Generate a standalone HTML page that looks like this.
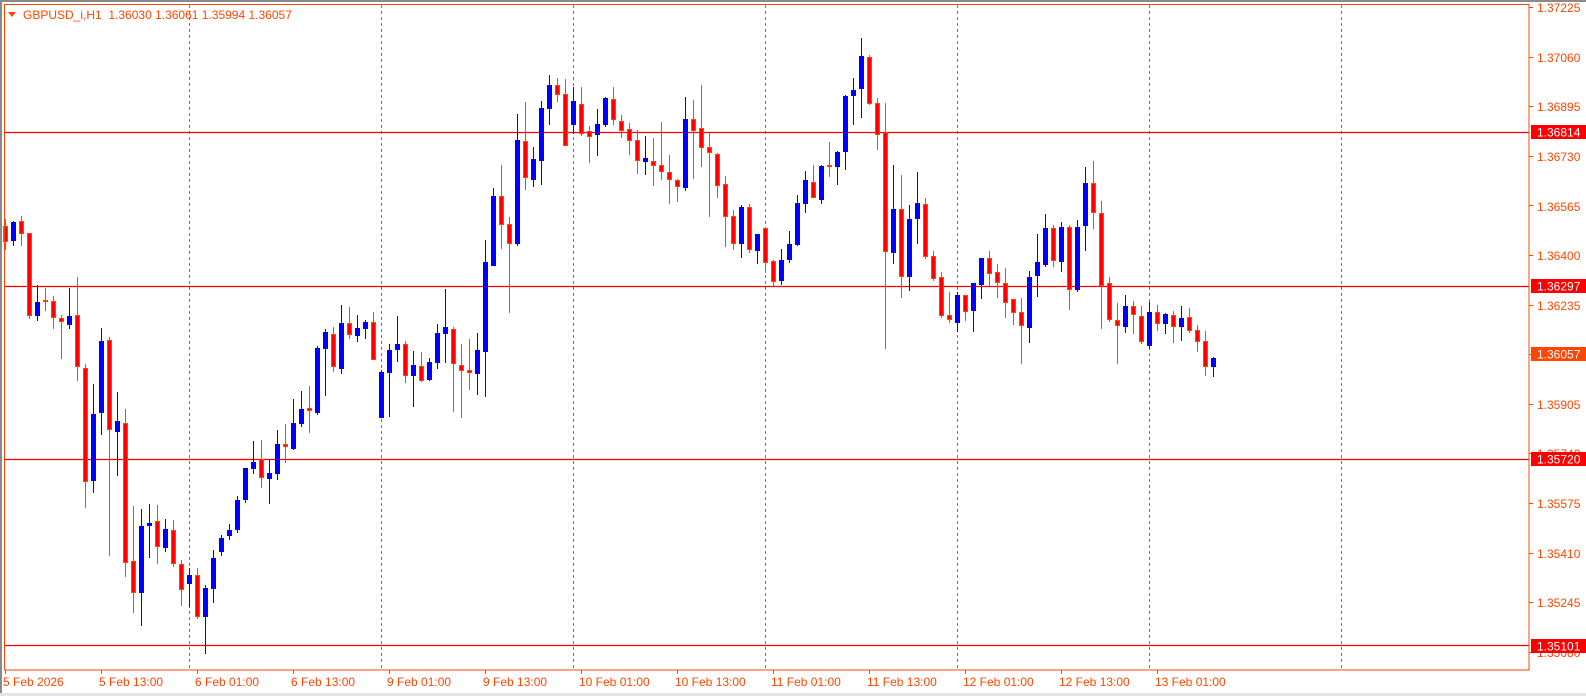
<!DOCTYPE html>
<html><head><meta charset="utf-8"><style>
html,body{margin:0;padding:0;background:#fff;}
body{width:1586px;height:696px;overflow:hidden;position:relative;font-family:"Liberation Sans",sans-serif;}
svg{position:absolute;left:0;top:0;}
</style></head><body>
<svg id="s" width="1586" height="696" xmlns="http://www.w3.org/2000/svg" font-family="Liberation Sans, sans-serif" font-size="12">
<rect x="0" y="0" width="1586" height="696" fill="#fff"/>
<rect x="0" y="0" width="1586" height="2" fill="#8a8a8a"/>
<rect x="0" y="0" width="2" height="696" fill="#8a8a8a"/>
<rect x="0" y="693" width="1586" height="3" fill="#e4e4e4"/>
<g id="grid" stroke="#ff4500" stroke-width="1" stroke-dasharray="3,3">
<line x1="189.5" y1="5" x2="189.5" y2="670"/>
<line x1="381.5" y1="5" x2="381.5" y2="670"/>
<line x1="573.5" y1="5" x2="573.5" y2="670"/>
<line x1="765.5" y1="5" x2="765.5" y2="670"/>
<line x1="957.5" y1="5" x2="957.5" y2="670"/>
<line x1="1149.5" y1="5" x2="1149.5" y2="670"/>
<line x1="1341.5" y1="5" x2="1341.5" y2="670"/>
</g>
<g stroke="#ff0000" stroke-width="1.3">
<line x1="4" y1="132.5" x2="1529" y2="132.5"/>
<line x1="4" y1="286.5" x2="1529" y2="286.5"/>
<line x1="4" y1="459.5" x2="1529" y2="459.5"/>
<line x1="4" y1="645.5" x2="1529" y2="645.5"/>
</g>
<g id="candles"></g>
<rect x="4.5" y="4.5" width="1524.5" height="665.5" fill="none" stroke="#ff4500" stroke-width="1"/>
<g fill="#ff4500" id="ticks"></g>
<polygon points="8,12 16,12 12,17" fill="#ff4500"/>
<text x="23" y="19" fill="#ff4500" font-size="12">GBPUSD_i,H1&#160;&#160;1.36030 1.36061 1.35994 1.36057</text>
<g fill="#ff4500" font-size="12">
<text x="1537" y="12">1.37225</text>
<text x="1537" y="62">1.37060</text>
<text x="1537" y="111">1.36895</text>
<text x="1537" y="161">1.36730</text>
<text x="1537" y="211">1.36565</text>
<text x="1537" y="260">1.36400</text>
<text x="1537" y="310">1.36235</text>
<text x="1537" y="409">1.35905</text>
<text x="1537" y="458">1.35740</text>
<text x="1537" y="508">1.35575</text>
<text x="1537" y="558">1.35410</text>
<text x="1537" y="607">1.35245</text>
<text x="1537" y="657">1.35080</text>
</g>
<rect x="1531" y="125" width="55" height="14" fill="#ff0000"/>
<text x="1537" y="136.5" fill="#fff">1.36814</text>
<rect x="1531" y="279" width="55" height="14" fill="#ff0000"/>
<text x="1537" y="290.5" fill="#fff">1.36297</text>
<rect x="1531" y="347" width="55" height="14" fill="#ff4500"/>
<text x="1537" y="358.5" fill="#fff">1.36057</text>
<rect x="1531" y="452" width="55" height="14" fill="#ff0000"/>
<text x="1537" y="463.5" fill="#fff">1.35720</text>
<rect x="1531" y="639" width="55" height="14" fill="#ff0000"/>
<text x="1537" y="650.5" fill="#fff">1.35101</text>
<g fill="#ff4500" font-size="12">
<text x="3" y="686">5 Feb 2026</text>
<text x="99" y="686">5 Feb 13:00</text>
<text x="195" y="686">6 Feb 01:00</text>
<text x="291" y="686">6 Feb 13:00</text>
<text x="387" y="686">9 Feb 01:00</text>
<text x="483" y="686">9 Feb 13:00</text>
<text x="579" y="686">10 Feb 01:00</text>
<text x="675" y="686">10 Feb 13:00</text>
<text x="771" y="686">11 Feb 01:00</text>
<text x="867" y="686">11 Feb 13:00</text>
<text x="963" y="686">12 Feb 01:00</text>
<text x="1059" y="686">12 Feb 13:00</text>
<text x="1155" y="686">13 Feb 01:00</text>
</g>
</svg>
<script>
var D=[
"r 219 226 242 250","b 221 222 241 246","r 216 221 234 246","r 233 233 316 319","b 285 302 316 321",
"r 288 300 302 311","r 296 301 318 329","r 315 318 322 359","b 288 316 325 329","r 277 315 367 381",
"r 364 368 482 508","b 384 414 481 493","b 328 341 413 435","r 337 340 430 556","b 392 421 432 476",
"r 409 423 563 577","r 506 561 593 613","b 509 526 593 626","b 504 523 526 558","r 505 521 547 564",
"b 519 529 548 552","r 520 530 564 567","r 560 564 590 606","b 568 575 584 607","r 568 575 617 619",
"b 585 588 617 654","b 550 558 589 603","b 535 538 552 556","b 524 530 536 540","b 496 500 530 533",
"b 468 468 500 503","b 441 462 469 474","r 440 459 478 488","b 459 473 479 504","b 430 444 474 480",
"r 424 444 447 463","b 399 423 449 450","b 391 409 424 427","r 386 408 411 433","b 346 348 413 415",
"b 329 332 349 396","r 327 334 367 372","b 305 323 369 374","r 307 323 335 339","b 315 328 336 342",
"b 320 322 329 339","r 312 322 360 360","b 370 372 418 418","b 344 350 373 417","b 316 344 350 362",
"r 341 344 376 383","b 351 365 376 407","r 352 366 381 382","b 358 362 380 381","b 324 333 363 369",
"b 289 327 334 363","r 327 329 364 412","r 344 365 371 418","r 339 370 373 390","b 333 350 374 395",
"b 240 262 352 397","b 188 196 266 266","r 165 196 225 249","r 217 224 244 313","b 114 140 244 246",
"r 102 141 178 190","b 147 159 180 187","b 101 108 161 185","b 75 85 109 125","r 78 85 95 102",
"r 79 94 146 146","b 87 101 125 134","r 87 104 134 136","r 126 131 137 163","b 109 124 135 156",
"b 97 98 125 127","r 87 99 120 125","r 115 121 131 138","r 123 129 141 155","r 130 140 161 174",
"b 136 158 162 175","r 138 161 166 186","r 122 165 172 180","r 155 172 180 204","r 179 180 187 202",
"b 97 119 188 191","r 100 119 131 179","r 85 128 148 167","r 133 147 153 217","r 153 154 186 198",
"r 176 184 217 247","r 210 216 244 250","b 205 207 244 258","r 204 207 250 253","b 234 234 251 264",
"r 227 228 263 273","r 260 261 282 286","b 249 260 281 285","b 231 244 260 263","b 195 203 245 246",
"b 171 180 204 213","r 165 182 198 198","b 165 166 200 204","r 142 165 167 177","b 151 152 167 185",
"b 95 96 152 170","b 78 90 96 125","b 38 56 89 118","r 55 57 104 105","r 98 103 135 150",
"r 103 132 252 349","b 165 209 253 264","r 175 209 277 298","b 205 219 277 291","b 172 203 219 244",
"r 198 204 257 259","r 251 256 279 281","r 272 277 316 318","r 292 315 320 323","b 292 295 323 332",
"r 295 295 312 321","b 283 283 311 332","b 258 258 285 299","r 251 258 274 286","r 264 272 283 298",
"r 268 283 303 318","r 299 299 313 325","r 298 312 326 364","b 271 277 328 343","b 234 262 276 297",
"b 214 228 265 267","r 225 228 261 267","b 222 227 262 272","r 225 227 290 310","b 220 227 290 292",
"b 167 183 226 251","r 161 183 213 229","r 201 213 286 329","r 277 283 320 322","r 303 320 326 364",
"b 295 306 327 333","r 301 306 315 334","r 306 316 342 344","b 302 312 346 349","r 305 312 324 331",
"b 313 314 324 334","r 311 315 327 343","b 306 318 327 341","r 308 317 331 333","r 325 330 342 352",
"r 331 341 367 376","b 357 358 367 377"
];
var g=document.getElementById('candles'),ns='http://www.w3.org/2000/svg',h='';
for(var i=0;i<D.length;i++){
 var p=D[i].split(' '),c=p[0],hi=+p[1],t=+p[2],b=+p[3],lo=+p[4];
 var x=Math.round(5.3+8*i)+0.5;
 var wc=c=='b'?'#0000ff':'#ff4500';
 h+='<line x1="'+x+'" y1="'+hi+'" x2="'+x+'" y2="'+lo+'" stroke="'+wc+'" stroke-width="1"/>';
 if(b-t<1)b=t+1;
 if(c=='b') h+='<rect x="'+(x-2.5)+'" y="'+t+'" width="5" height="'+(b-t)+'" fill="#0000ff"/>';
 else h+='<rect x="'+(x-2)+'" y="'+(t+0.5)+'" width="4" height="'+Math.max(b-t-1,1)+'" fill="#ff0000" stroke="#ff4500" stroke-width="1"/>';
}
g.innerHTML=h;
var tk='';
for(var k=0;k<14;k++){var y=Math.round(7+49.6*k);tk+='<rect x="1529" y="'+y+'" width="4" height="1"/>';}
for(var k=0;k<13;k++){tk+='<rect x="'+(5+96*k)+'" y="670" width="1" height="4"/>';}
document.getElementById('ticks').innerHTML=tk;
</script>
</body></html>
